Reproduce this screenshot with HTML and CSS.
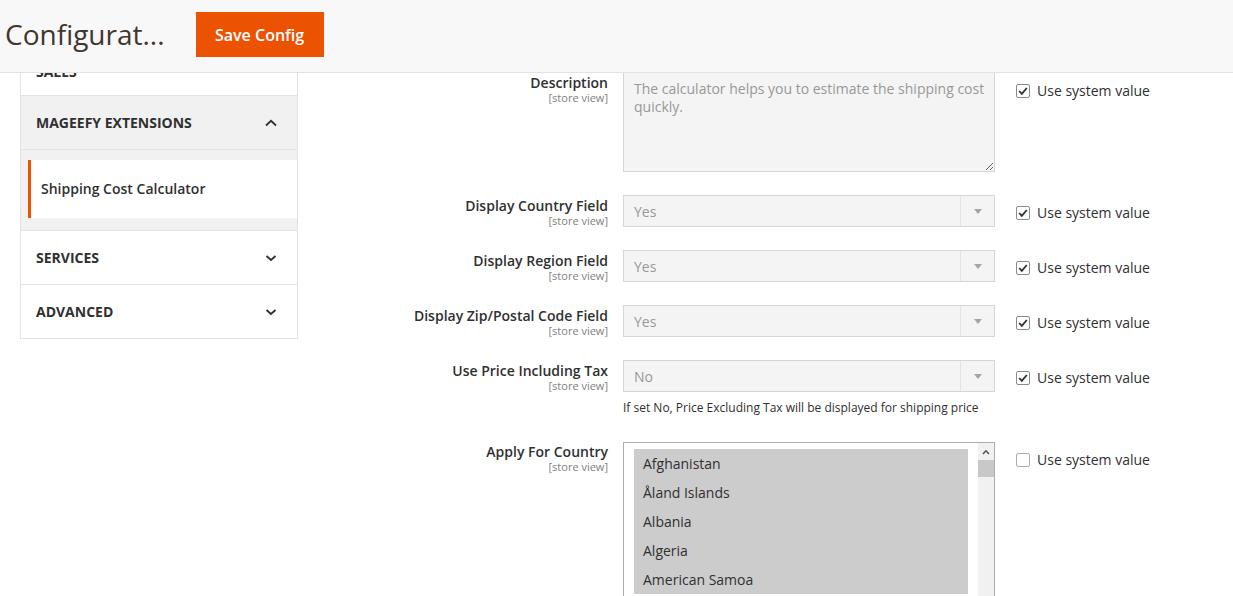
FILE: index.html
```html
<!DOCTYPE html>
<html lang="en">
<head>
<meta charset="utf-8">
<title>Configuration</title>
<link rel="stylesheet" href="styles.css">
</head>
<body>
<header class="page-header">
  <h1 class="page-title">Configurat...</h1>
  <button class="btn-primary" type="button">Save Config</button>
</header>

<div class="page">
  <aside class="nav">
    <div class="nav-group">
      <div class="nav-title nav-title--partial">Sales</div>
    </div>
    <div class="nav-group nav-group--open">
      <div class="nav-title">Mageefy Extensions
        <svg class="chev" width="12" height="8" viewBox="0 0 12 8"><polyline points="1,6.5 6,1.8 11,6.5" fill="none" stroke="#303030" stroke-width="1.8"/></svg>
      </div>
      <ul class="nav-items">
        <li class="nav-item nav-item--active">Shipping Cost Calculator</li>
      </ul>
    </div>
    <div class="nav-group">
      <div class="nav-title">Services
        <svg class="chev" width="12" height="8" viewBox="0 0 12 8"><polyline points="1.5,2 6,6 10.5,2" fill="none" stroke="#303030" stroke-width="1.8"/></svg>
      </div>
    </div>
    <div class="nav-group">
      <div class="nav-title">Advanced
        <svg class="chev" width="12" height="8" viewBox="0 0 12 8"><polyline points="1.5,2 6,6 10.5,2" fill="none" stroke="#303030" stroke-width="1.8"/></svg>
      </div>
    </div>
  </aside>

  <main class="main">
    <div class="row">
      <div class="label"><span class="label-text">Description</span><span class="scope">[store view]</span></div>
      <div class="control">
        <textarea class="textarea" readonly>The calculator helps you to estimate the shipping cost quickly.</textarea>
      </div>
      <div class="use-default"><span class="cb cb--checked"><svg width="12" height="12" viewBox="0 0 12 12"><polyline points="2.2,6 4.8,8.8 9.8,3" fill="none" stroke="#303030" stroke-width="1.8"/></svg></span>Use system value</div>
    </div>

    <div class="row">
      <div class="label"><span class="label-text">Display Country Field</span><span class="scope">[store view]</span></div>
      <div class="control">
        <div class="select"><span class="select-value">Yes</span><span class="select-arrow"><span class="tri"></span></span></div>
      </div>
      <div class="use-default"><span class="cb cb--checked"><svg width="12" height="12" viewBox="0 0 12 12"><polyline points="2.2,6 4.8,8.8 9.8,3" fill="none" stroke="#303030" stroke-width="1.8"/></svg></span>Use system value</div>
    </div>

    <div class="row">
      <div class="label"><span class="label-text">Display Region Field</span><span class="scope">[store view]</span></div>
      <div class="control">
        <div class="select"><span class="select-value">Yes</span><span class="select-arrow"><span class="tri"></span></span></div>
      </div>
      <div class="use-default"><span class="cb cb--checked"><svg width="12" height="12" viewBox="0 0 12 12"><polyline points="2.2,6 4.8,8.8 9.8,3" fill="none" stroke="#303030" stroke-width="1.8"/></svg></span>Use system value</div>
    </div>

    <div class="row">
      <div class="label"><span class="label-text">Display Zip/Postal Code Field</span><span class="scope">[store view]</span></div>
      <div class="control">
        <div class="select"><span class="select-value">Yes</span><span class="select-arrow"><span class="tri"></span></span></div>
      </div>
      <div class="use-default"><span class="cb cb--checked"><svg width="12" height="12" viewBox="0 0 12 12"><polyline points="2.2,6 4.8,8.8 9.8,3" fill="none" stroke="#303030" stroke-width="1.8"/></svg></span>Use system value</div>
    </div>

    <div class="row">
      <div class="label"><span class="label-text">Use Price Including Tax</span><span class="scope">[store view]</span></div>
      <div class="control">
        <div class="select"><span class="select-value">No</span><span class="select-arrow"><span class="tri"></span></span></div>
        <p class="note">If set No, Price Excluding Tax will be displayed for shipping price</p>
      </div>
      <div class="use-default"><span class="cb cb--checked"><svg width="12" height="12" viewBox="0 0 12 12"><polyline points="2.2,6 4.8,8.8 9.8,3" fill="none" stroke="#303030" stroke-width="1.8"/></svg></span>Use system value</div>
    </div>

    <div class="row">
      <div class="label label--tight"><span class="label-text">Apply For Country</span><span class="scope">[store view]</span></div>
      <div class="control">
        <div class="multiselect" role="listbox" aria-multiselectable="true">
          <div class="ms-options">
            <div class="ms-option" role="option" aria-selected="true">Afghanistan</div>
            <div class="ms-option" role="option" aria-selected="true">Åland Islands</div>
            <div class="ms-option" role="option" aria-selected="true">Albania</div>
            <div class="ms-option" role="option" aria-selected="true">Algeria</div>
            <div class="ms-option" role="option" aria-selected="true">American Samoa</div>
          </div>
          <div class="ms-scroll">
            <div class="ms-up"><svg width="8" height="6" viewBox="0 0 8 6"><polyline points="1,5 4,1.8 7,5" fill="none" stroke="#505050" stroke-width="1.5"/></svg></div>
            <div class="ms-thumb"></div>
          </div>
        </div>
      </div>
      <div class="use-default"><span class="cb"></span>Use system value</div>
    </div>
  </main>
</div>
</body>
</html>
```

FILE: styles.css
```css
html, body {
  margin: 0;
  height: 100%;
  overflow: hidden;
  background: #fff;
}

body {
  font-family: "Open Sans", "Liberation Sans", sans-serif;
  font-size: 14px;
  color: #303030;
}

/* Header (sticky over scrolled content) */
.page-header {
  position: fixed;
  top: 0;
  left: 0;
  right: 0;
  z-index: 10;
  height: 73px;
  box-sizing: border-box;
  padding: 0 0 3px 5px;
  display: flex;
  align-items: center;
  background: #f8f8f8;
  border-bottom: 1px solid #e3e3e3;
}

.page-title {
  margin: 0;
  font-size: 28px;
  font-weight: 400;
  line-height: 1.2;
  color: #41362f;
}

.btn-primary {
  margin-left: 31px;
  height: 45px;
  width: 128px;
  padding: 0;
  border: 0;
  background: #eb5202;
  color: #fff;
  font-family: "Open Sans", "Liberation Sans", sans-serif;
  font-size: 16px;
  font-weight: 600;
}

/* Page layout */
.page {
  display: flex;
  padding: 42px 20px 0;
}

/* Sidebar nav */
.nav {
  flex: none;
  align-self: flex-start;
  width: 278px;
  box-sizing: border-box;
  border: 1px solid #e3e3e3;
  border-top: 0;
  border-bottom: 0;
}

.nav-title {
  height: 53px;
  display: flex;
  align-items: center;
  justify-content: space-between;
  padding: 0 20px 0 15px;
  border-bottom: 1px solid #e3e3e3;
  font-size: 14px;
  font-weight: 700;
  text-transform: uppercase;
  color: #303030;
}

.nav-title--partial {
  box-sizing: border-box;
  height: 54px;
  padding-top: 6px;
}

.nav-group--open .nav-title {
  background: #f1f1f1;
}

.chev {
  display: block;
}

.nav-items {
  list-style: none;
  margin: 0;
  padding: 10px 0 12px;
  background: #f1f1f1;
  border-bottom: 1px solid #e3e3e3;
}

.nav-item {
  height: 58px;
  display: flex;
  align-items: center;
  padding-left: 10px;
  padding-bottom: 1px;
  box-sizing: border-box;
  margin-left: 7px;
  border-left: 3px solid transparent;
  font-weight: 600;
}

.nav-item--active {
  background: #fff;
  border-left-color: #eb5202;
}

/* Main form */
.main {
  flex: 1;
  padding-top: 30px;
}

.row {
  display: grid;
  grid-template-columns: 325px 372px 1fr;
  margin-bottom: 23px;
}

.label {
  text-align: right;
  padding: 1px 15px 0 0;
}

.label--tight {
  padding-top: 0;
}

.label-text {
  display: block;
  font-weight: 600;
  line-height: 19px;
}

.scope {
  display: block;
  font-size: 11px;
  line-height: 11px;
  color: #808080;
}

.control {
  min-width: 0;
}

.textarea {
  display: block;
  width: 372px;
  height: 100px;
  box-sizing: border-box;
  margin: 0;
  padding: 7px 4px 6px 10px;
  border: 1px solid #d6d6d6;
  border-radius: 0;
  background: #f4f4f4;
  color: #989898;
  font-family: "Open Sans", "Liberation Sans", sans-serif;
  font-size: 14px;
  line-height: 18px;
  outline: none;
}

.select {
  height: 32px;
  box-sizing: border-box;
  display: flex;
  align-items: center;
  border: 1px solid #d6d6d6;
  background: #f4f4f4;
  color: #989898;
}

.select-value {
  flex: 1;
  padding-left: 10px;
  line-height: 18px;
  padding-top: 1px;
}

.select-arrow {
  align-self: stretch;
  width: 33px;
  border-left: 1px solid #e3e3e3;
  display: flex;
  align-items: center;
  justify-content: center;
}

.tri {
  width: 0;
  height: 0;
  border-left: 4px solid transparent;
  border-right: 4px solid transparent;
  border-top: 5px solid #a8a4a1;
  margin-top: 1px;
}

.note {
  margin: 7px 0 2px;
  font-size: 12px;
  line-height: 18px;
  color: #303030;
}

.use-default {
  display: flex;
  align-items: center;
  align-self: start;
  gap: 7px;
  padding: 9px 0 0 21px;
  line-height: 18px;
  color: #303030;
}

.row:first-child .use-default {
  padding-top: 10px;
}

.cb {
  width: 14px;
  height: 14px;
  box-sizing: border-box;
  border: 1px solid #adadad;
  border-radius: 2px;
  background: #fff;
  display: flex;
  align-items: center;
  justify-content: center;
  flex: none;
}

.cb--checked {
  border-color: #8a8a8a;
}

/* Multiselect */
.multiselect {
  display: flex;
  height: 180px;
  border: 1px solid #adadad;
  background: #fff;
}

.ms-options {
  flex: 1;
  padding: 6px 10px;
  overflow: hidden;
}

.ms-option {
  height: 29px;
  line-height: 29px;
  padding-left: 9px;
  background: #cccccc;
  color: #303030;
}

.ms-scroll {
  width: 16px;
  background: #f1f1f1;
  display: flex;
  flex-direction: column;
}

.ms-up {
  height: 17px;
  display: flex;
  align-items: center;
  justify-content: center;
}

.ms-thumb {
  height: 17px;
  background: #c8c8c8;
}
```
